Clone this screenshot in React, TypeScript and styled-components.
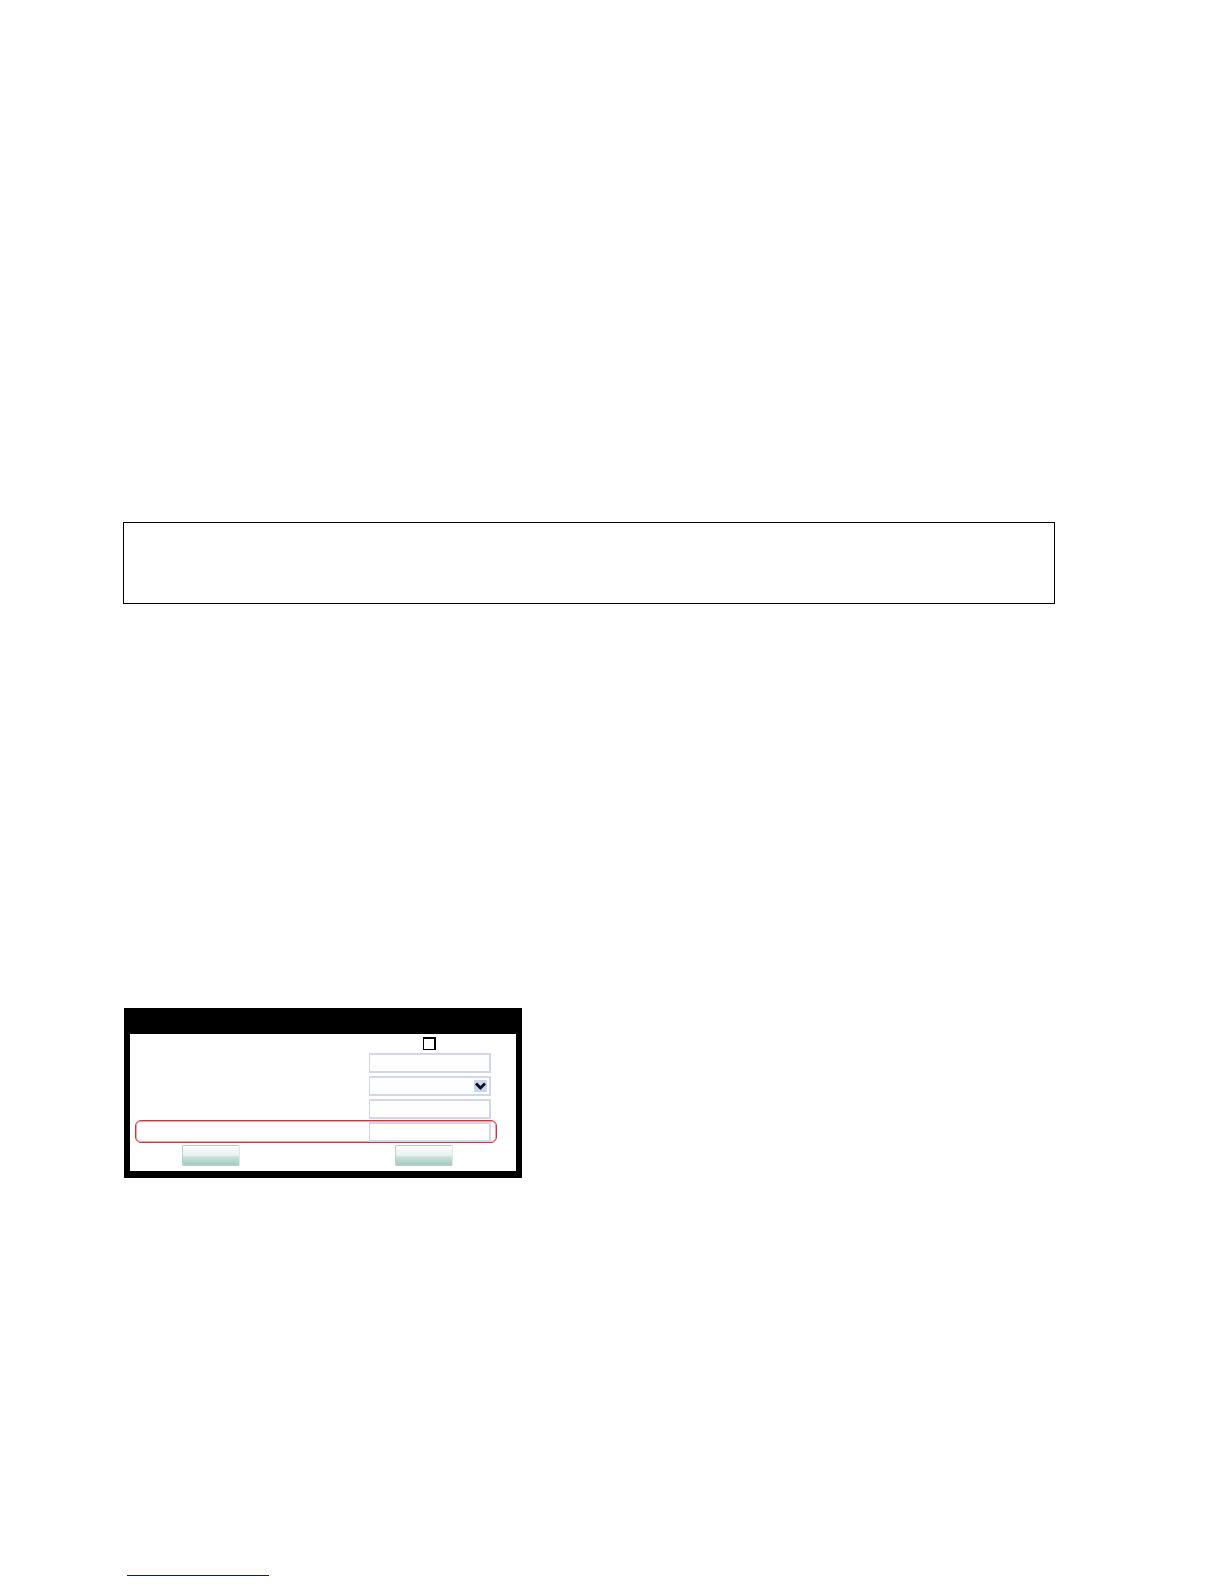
import styled, { createGlobalStyle, css } from "styled-components";

const GlobalStyle = createGlobalStyle`
  *, *::before, *::after {
    box-sizing: border-box;
  }

  body {
    margin: 0;
    background-color: #fff;
    font-family: "Liberation Sans", Arial, sans-serif;
    font-size: 12px;
  }
`;

const Page = styled.main`
  display: flex;
  flex-direction: column;
  gap: 381px;
  padding: 522px 169px 8px 123px;
`;

const NoteBox = styled.section`
  height: 82px;
  margin-bottom: 23px;
  border: 1px solid #000;
`;

const Dialog = styled.form`
  display: flex;
  flex-direction: column;
  width: 100%;
  max-width: 398px;
  margin-left: 1px;
  padding: 0 6px 7px;
  background-color: #000;
`;

const DialogHeader = styled.header`
  height: 26px;
`;

const DialogBody = styled.div`
  padding: 0 19px 5px 5px;
  background-color: #fff;
`;

const CheckRow = styled.div`
  display: flex;
  justify-content: flex-end;
  padding: 3px 61px 1px 0;
`;

const Checkbox = styled.input`
  appearance: none;
  width: 13px;
  height: 13px;
  margin: 0;
  border: 1px solid #000;
  border-top-width: 2px;
  border-right-width: 2px;
  background-color: #fff;
`;

const FieldRow = styled.div<{ $highlighted?: boolean }>`
  display: flex;
  justify-content: flex-end;
  height: 23px;
  padding: 1px 5px 0 0;
  border: 1px solid transparent;

  ${({ $highlighted }) =>
    $highlighted &&
    css`
      border-color: #d2333a;
      border-radius: 6px;
      box-shadow: inset 0 0 0 1px #f3a5aa;
    `}
`;

const fieldStyle = css`
  width: 122px;
  height: 20px;
  margin: 0;
  padding: 0 4px;
  border: 2px solid #d3d5ec;
  border-left-width: 1px;
  border-radius: 0;
  background-color: #fefefe;
  font: inherit;
`;

const TextInput = styled.input`
  ${fieldStyle}
`;

const SelectWrapper = styled.div`
  position: relative;
  height: 20px;
`;

const Select = styled.select`
  ${fieldStyle}
  appearance: none;
`;

const SelectArrow = styled.svg`
  position: absolute;
  top: 4px;
  right: 4px;
  pointer-events: none;
`;

const ButtonRow = styled.div`
  display: flex;
  justify-content: space-between;
  padding: 2px 44px 0 47px;
`;

const Button = styled.button`
  width: 58px;
  height: 21px;
  padding: 0;
  border: 1px solid #b5d3cd;
  border-top-color: #b9cbc7;
  border-right-color: #dcebe8;
  border-radius: 2px;
  background: linear-gradient(#fbfdfc 0%, #e9f1ef 50%, #c9dfda 58%, #a5cbc3 100%);
`;

const FooterLink = styled.a`
  width: 142px;
  height: 17px;
  margin-left: 4px;
  border-bottom: 1px solid #14148c;
`;

const App = () => {
  return (
    <>
      <GlobalStyle />
      <Page>
        <NoteBox />
        <Dialog onSubmit={(e) => e.preventDefault()}>
          <DialogHeader />
          <DialogBody>
            <CheckRow>
              <Checkbox type="checkbox" aria-label="Enable" />
            </CheckRow>
            <FieldRow>
              <TextInput type="text" aria-label="Name" />
            </FieldRow>
            <FieldRow>
              <SelectWrapper>
                <Select aria-label="Type" defaultValue="">
                  <option value="" />
                </Select>
                <SelectArrow width="13" height="12" viewBox="0 0 13 12" aria-hidden="true">
                  <rect width="13" height="12" rx="1" fill="#cbd5ee" />
                  <path d="M2 3.5 6.5 8 11 3.5" fill="none" stroke="#0b1023" strokeWidth="2.8" />
                </SelectArrow>
              </SelectWrapper>
            </FieldRow>
            <FieldRow>
              <TextInput type="text" aria-label="Address" />
            </FieldRow>
            <FieldRow $highlighted>
              <TextInput type="text" aria-label="Value" />
            </FieldRow>
            <ButtonRow>
              <Button type="submit" aria-label="Submit" />
              <Button type="reset" aria-label="Reset" />
            </ButtonRow>
          </DialogBody>
        </Dialog>
        <FooterLink href="#" aria-label="Contents" />
      </Page>
    </>
  );
};

export default App;
